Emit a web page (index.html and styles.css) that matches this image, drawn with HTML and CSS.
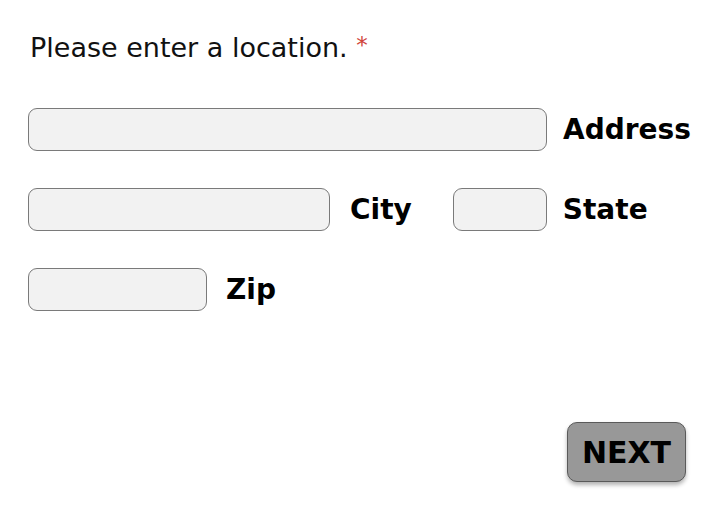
FILE: index.html
```html
<!DOCTYPE html>
<html>
<head>
<meta charset="utf-8">
<link rel="stylesheet" href="styles.css">
</head>
<body>
<div class="page">
  <h1 class="title">Please enter a location. <span class="req">*</span></h1>
  <div class="form">
    <div class="row">
      <div class="field w-address"></div>
      <span class="label">Address</span>
    </div>
    <div class="row">
      <div class="field w-city"></div>
      <span class="label">City</span>
      <div class="field w-state state-gap"></div>
      <span class="label">State</span>
    </div>
    <div class="row">
      <div class="field w-zip"></div>
      <span class="label zip-label">Zip</span>
    </div>
  </div>
  <div class="actions">
    <button class="next">NEXT</button>
  </div>
</div>
</body>
</html>
```
FILE: styles.css
```css
html, body {
  margin: 0;
  padding: 0;
  background: #ffffff;
}
.page {
  width: 720px;
  height: 512px;
  box-sizing: border-box;
  padding: 25px 0 0 28px;
  font-family: "DejaVu Sans", sans-serif;
  color: #000;
}
.title {
  margin: 0 0 0 2px;
  font-size: 27px;
  font-weight: normal;
  line-height: 40px;
  letter-spacing: 0px;
  color: #111;
}
.req {
  color: #d0453b;
  font-size: 23px;
  vertical-align: 4px;
}
.form {
  display: flex;
  flex-direction: column;
  gap: 37px;
  margin-top: 40px;
}
.row {
  display: flex;
  align-items: center;
  gap: 16px;
  height: 43px;
}
.field {
  height: 43px;
  box-sizing: border-box;
  background: #f2f2f2;
  border: 1px solid #7a7a7a;
  border-radius: 9px;
}
.w-address { width: 519px; }
.w-city { width: 302px; margin-right: 4px; }
.w-state { width: 94px; }
.state-gap { margin-left: 25px; }
.w-zip { width: 179px; margin-right: 3px; }
.label {
  font-weight: bold;
  font-size: 28px;
  letter-spacing: 0px;
}
.actions {
  display: flex;
  justify-content: flex-end;
  padding-right: 34px;
  margin-top: 111px;
}
.next {
  width: 119px;
  height: 60px;
  box-sizing: border-box;
  background: #989898;
  border: 1px solid #5a5a5a;
  border-radius: 10px;
  box-shadow: 0 3px 4px rgba(0,0,0,0.3);
  font-family: "DejaVu Sans", sans-serif;
  font-weight: bold;
  font-size: 30px;
  color: #000;
  padding: 0;
}
```
